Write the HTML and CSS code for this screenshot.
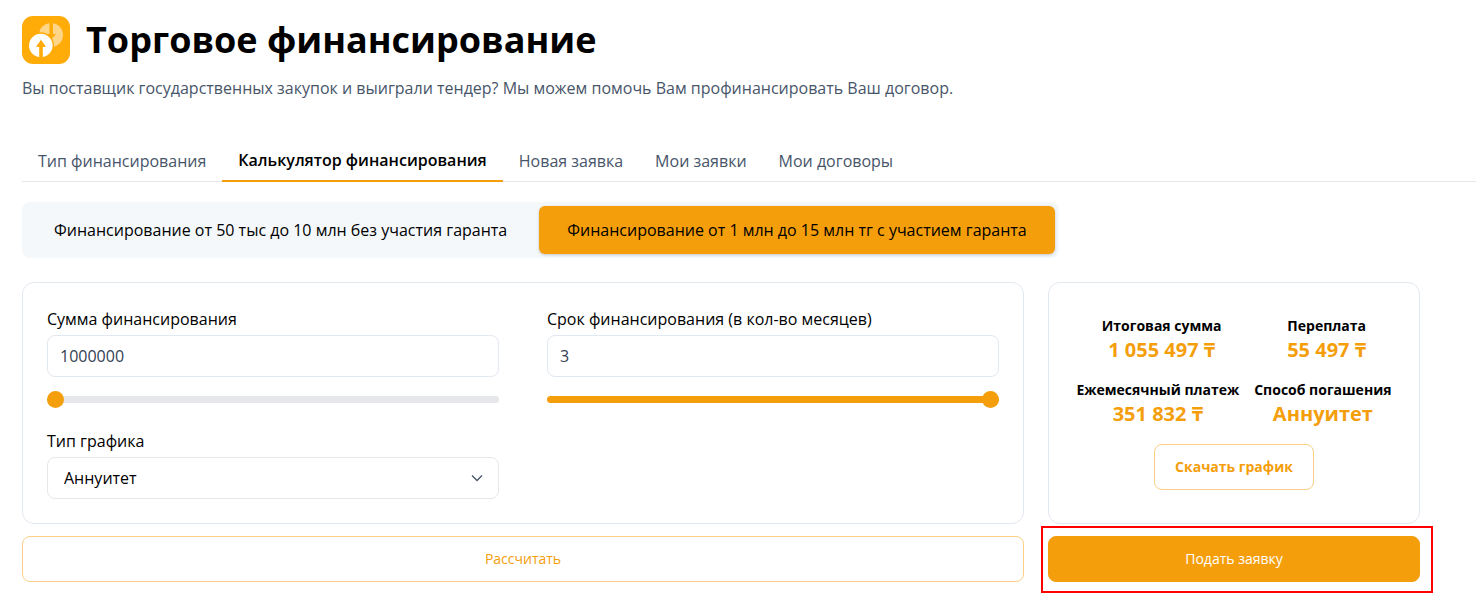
FILE: index.html
```html
<!DOCTYPE html>
<html lang="ru">
<head>
  <meta charset="UTF-8" />
  <meta name="viewport" content="width=device-width, initial-scale=1.0"/>
  <title>Торговое финансирование</title>
  <link rel="stylesheet" href="styles.css">
</head>
<body>
  <header class="header">
    <svg class="logo" viewBox="0 0 48 48" aria-hidden="true">
      <rect width="48" height="48" rx="11" fill="#ffab08"/>
      <circle cx="29" cy="19" r="12" fill="#ffd588"/>
      <path d="M27.500 6h3.500v12h3l-4.700 5.500-4.800-5.500h3z" fill="#ffab08"/>
      <circle cx="18.800" cy="29.500" r="13.200" fill="#ffab08"/>
      <circle cx="18.800" cy="29.500" r="11.800" fill="#fff"/>
      <path d="M19 23.700l4.500 6.300v1h-2.700v12h-3.600V31h-2.700v-1z" fill="#ffab08"/>
    </svg>
    <h1>Торговое финансирование</h1>
  </header>
  <p class="subtitle">Вы поставщик государственных закупок и выиграли тендер? Мы можем помочь Вам профинансировать Ваш договор.</p>

  <nav class="tabs">
    <button type="button" class="tab">Тип финансирования</button>
    <button type="button" class="tab active">Калькулятор финансирования</button>
    <button type="button" class="tab">Новая заявка</button>
    <button type="button" class="tab">Мои заявки</button>
    <button type="button" class="tab">Мои договоры</button>
  </nav>

  <div class="switch">
    <button type="button" class="switch-btn">Финансирование от 50 тыс до 10 млн без участия гаранта</button>
    <button type="button" class="switch-btn active">Финансирование от 1 млн до 15 млн тг с участием гаранта</button>
  </div>

  <form class="calculator" id="calculatorForm">
    <div class="card fields">
      <div class="field">
        <label for="amount">Сумма финансирования</label>
        <input type="text" class="input" id="amount" name="amount" value="1000000" />
        <input type="range" class="range" id="amountRange" aria-label="Сумма финансирования" min="1000000" max="15000000" value="1000000" style="--fill: 0%" />
      </div>
      <div class="field">
        <label for="months">Срок финансирования (в кол-во месяцев)</label>
        <input type="text" class="input" id="months" name="months" value="3" />
        <input type="range" class="range" id="monthsRange" aria-label="Срок финансирования" min="1" max="3" value="3" style="--fill: 100%" />
      </div>
      <div class="field">
        <label for="schedule">Тип графика</label>
        <div class="select-wrap">
          <select class="input" id="schedule" name="schedule">
            <option value="annuity" selected>Аннуитет</option>
            <option value="equal">Равными долями</option>
          </select>
          <svg class="chevron" viewBox="0 0 12 12" aria-hidden="true">
            <path d="M1 3.500l5 5 5-5" fill="none" stroke="#475569" stroke-width="1.300"/>
          </svg>
        </div>
      </div>
    </div>

    <div class="card summary">
      <div class="summary-row">
        <div class="result">
          <span class="result-label">Итоговая сумма</span>
          <span class="result-value">1 055 497 ₸</span>
        </div>
        <div class="result">
          <span class="result-label">Переплата</span>
          <span class="result-value">55 497 ₸</span>
        </div>
      </div>
      <div class="summary-row">
        <div class="result">
          <span class="result-label">Ежемесячный платеж</span>
          <span class="result-value">351 832 ₸</span>
        </div>
        <div class="result">
          <span class="result-label">Способ погашения</span>
          <span class="result-value">Аннуитет</span>
        </div>
      </div>
      <button type="button" class="btn btn-outline btn-download">Скачать график</button>
    </div>

    <button type="button" class="btn btn-outline">Рассчитать</button>
    <div class="submit">
      <button type="submit" class="btn btn-primary">Подать заявку</button>
    </div>
  </form>

  <script>
    document.querySelectorAll(".field").forEach(function (field) {
      const range = field.querySelector(".range");
      if (!range) return;
      const input = field.querySelector(".input");

      function updateFill() {
        const percent = (range.value - range.min) / (range.max - range.min) * 100;
        range.style.setProperty("--fill", percent + "%");
      }

      range.addEventListener("input", function () {
        input.value = range.value;
        updateFill();
      });

      input.addEventListener("change", function () {
        range.value = input.value;
        updateFill();
      });
    });
  </script>
</body>
</html>
```
FILE: styles.css
```css
* {
  box-sizing: border-box;
}
body {
  margin: 0;
  padding: 16px 0 16px 22px;
  font-family: "Open Sans", "Noto Sans", sans-serif;
  font-size: 16px;
  line-height: 24px;
  color: #000;
  background: #fff;
}
button, input, select {
  font: inherit;
  color: inherit;
}
button {
  cursor: pointer;
}
.header {
  display: flex;
  align-items: center;
  gap: 16px;
}
.logo {
  width: 48px;
  height: 48px;
}
h1 {
  margin: 0;
  font-size: 36px;
  line-height: 48px;
  font-weight: 700;
}
.subtitle {
  margin: 12px 0 40px;
  color: #475569;
}

/* tabs */
.tabs {
  display: flex;
  height: 42px;
  box-shadow: inset 0 -1px 0 #e5e7eb;
}
.tab {
  padding: 0 16px;
  border: none;
  background: none;
  color: #475569;
}
.tab.active {
  border-bottom: 2px solid #f59e0b;
  color: #000;
  font-weight: 600;
}

/* program switch */
.switch {
  display: inline-flex;
  gap: 4px;
  margin: 20px 0 24px;
  padding: 4px;
  border-radius: 8px;
  background: #f4f8fb;
  vertical-align: top;
}
.switch-btn {
  height: 48px;
  padding: 0 28px;
  border: none;
  border-radius: 6px;
  background: none;
}
.switch-btn.active {
  background: #f59e0b;
  box-shadow: 0 1px 3px rgba(0,0,0,0.2);
}

/* calculator */
.calculator {
  display: grid;
  grid-template-columns: 1fr 372px;
  gap: 12px 24px;
  margin-right: 56px;
}
.card {
  padding: 24px;
  border: 1px solid #e2e8f0;
  border-radius: 12px;
}
.fields {
  display: grid;
  grid-template-columns: 1fr 1fr;
  gap: 21px 48px;
}
.field {
  display: flex;
  flex-direction: column;
}
.input {
  width: 100%;
  height: 42px;
  margin-top: 4px;
  padding: 0 12px;
  border: 1px solid #e2e8f0;
  border-radius: 8px;
  background: #fff;
  color: #334155;
}
.select-wrap {
  position: relative;
}
select.input {
  appearance: none;
  padding: 0 16px;
  border-color: #e5e7eb;
  color: #000;
}
.chevron {
  position: absolute;
  right: 16px;
  bottom: 15px;
  width: 12px;
  height: 12px;
  pointer-events: none;
}
.range {
  appearance: none;
  width: 100%;
  height: 17px;
  margin: 14px 0 0;
  background: none;
}
.range::-webkit-slider-runnable-track {
  height: 7px;
  border-radius: 4px;
  background: linear-gradient(to right, #f59e0b var(--fill), #e5e7eb var(--fill));
}
.range::-webkit-slider-thumb {
  appearance: none;
  width: 17px;
  height: 17px;
  margin-top: -5px;
  border-radius: 50%;
  background: #f59e0b;
}

/* results */
.summary {
  display: flex;
  flex-direction: column;
  justify-content: center;
  gap: 16px;
}
.summary-row {
  display: flex;
  justify-content: space-around;
  gap: 8px;
}
.result {
  display: flex;
  flex-direction: column;
  text-align: center;
}
.result-label {
  font-size: 14px;
  line-height: 20px;
  font-weight: 700;
}
.result-value {
  font-size: 20px;
  line-height: 28px;
  font-weight: 700;
  color: #f59e0b;
}

/* buttons */
.btn {
  height: 46px;
  padding: 0 20px;
  border: 1px solid #f59e0b;
  border-radius: 8px;
  font-size: 14px;
  line-height: 20px;
}
.btn-outline {
  border-color: #fbcf85;
  background: #fff;
  color: #f59e0b;
}
.btn-download {
  align-self: center;
  font-weight: 700;
}
.btn-primary {
  width: 100%;
  background: #f59e0b;
  color: #fff;
}
.submit {
  position: relative;
}
.submit::after {
  content: "";
  position: absolute;
  inset: -10px -13px -11px -7px;
  border: 2px solid #f00;
  pointer-events: none;
}
```
